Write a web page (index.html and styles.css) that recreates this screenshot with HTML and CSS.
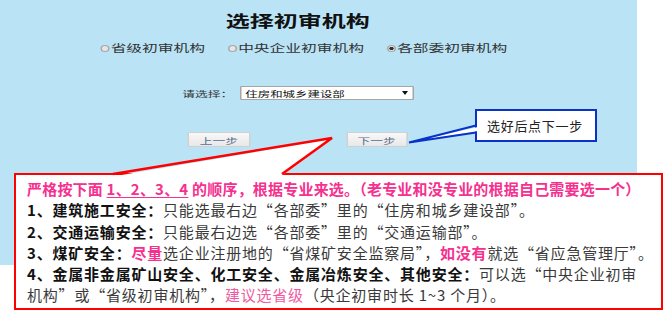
FILE: index.html
```html
<!DOCTYPE html>
<html lang="zh-CN">
<head>
    <meta charset="UTF-8">
    <meta name="viewport" content="width=device-width, initial-scale=1.0">
    <title>选择初审机构</title>
    <link rel="stylesheet" href="styles.css">
</head>
<body>
<div class="page">
    <div class="panel">
        <div class="form">
            <h1 class="title">选择初审机构</h1>
            <div class="org-types">
                <label class="org"><span class="radio"></span>省级初审机构</label>
                <label class="org"><span class="radio"></span>中央企业初审机构</label>
                <label class="org"><span class="radio checked"></span>各部委初审机构</label>
            </div>
            <div class="pick-row">
                <span class="pick-label">请选择：</span>
                <div class="select">
                    <span>住房和城乡建设部</span>
                    <span class="arrow"></span>
                </div>
            </div>
            <div class="steps">
                <button class="step">上一步</button>
                <button class="step">下一步</button>
            </div>
        </div>
    </div>

    <div class="tip">选好后点下一步</div>

    <div class="note">
        <div class="lead">严格按下面 <u>1、2、3、4</u> 的顺序，根据专业来选。（老专业和没专业的根据自己需要选一个）</div>
        <div><b>1、建筑施工安全：</b>只能选最右边“各部委”里的“住房和城乡建设部”。</div>
        <div><b>2、交通运输安全：</b>只能最右边选“各部委”里的“交通运输部”。</div>
        <div><b>3、煤矿安全：</b><b class="pink">尽量</b>选企业注册地的“省煤矿安全监察局”，<b class="pink">如没有</b>就选“省应急管理厅”。</div>
        <div><b>4、金属非金属矿山安全、化工安全、金属冶炼安全、其他安全：</b>可以选“中央企业初审</div>
        <div>机构”或“省级初审机构”，<span class="soft-pink">建议选省级</span>（央企初审时长 1~3 个月）。</div>
    </div>

    <svg class="pointers" width="666" height="316" viewBox="0 0 666 316">
        <polygon points="116,176 332,139 281,176" fill="#fff"/>
        <polyline points="113,174 332,138 282,174" fill="none" stroke="#ff0000" stroke-width="2.5"/>
        <polygon points="478,127 411,142 478,131" fill="#fff"/>
        <polyline points="476,125.5 409,142.5 476,132.5" fill="none" stroke="#0a32c8" stroke-width="2.2"/>
    </svg>
</div>
</body>
</html>
```

FILE: styles.css
```css
body {
    margin: 0;
    background: #fff;
    font-family: "Noto Sans CJK SC", sans-serif;
}

.page {
    position: relative;
    width: 666px;
    height: 316px;
    overflow: hidden;
}

.panel {
    width: 637px;
    height: 265px;
    background: #bae4f6;
}

/* the screenshot is stretched sideways, so the form is too */
.form {
    width: 397px;
    padding-top: 10px;
    transform: scaleX(1.5);
    transform-origin: 0 0;
    text-align: center;
}

.title {
    margin: 0;
    font-size: 16px;
    line-height: 20px;
    font-weight: 700;
    color: #111;
}

.org-types {
    display: flex;
    justify-content: center;
    gap: 15px;
    margin-top: 11px;
    padding-left: 8px;
    font-size: 10.5px;
    line-height: 14px;
    color: #333;
}

.org {
    display: flex;
    align-items: center;
    gap: 1px;
}

.radio {
    width: 6px;
    height: 7px;
    box-sizing: border-box;
    border: 1px solid #a8a8a8;
    border-radius: 50%;
    background: #e6e6e6;
}

.radio.checked {
    background: radial-gradient(circle, #333 0 1.2px, #e6e6e6 1.8px);
}

.pick-row {
    display: flex;
    justify-content: center;
    align-items: center;
    gap: 4px;
    height: 14px;
    margin-top: 31px;
}

.pick-label {
    font-size: 8.5px;
    color: #333;
}

.select {
    display: flex;
    justify-content: space-between;
    align-items: center;
    width: 116px;
    height: 14px;
    box-sizing: border-box;
    padding: 0 3px;
    border: 1px solid #a6a6a6;
    border-radius: 1px;
    background: #fff;
    font-size: 8.3px;
    color: #111;
}

.arrow {
    width: 0;
    height: 0;
    border-left: 2.3px solid transparent;
    border-right: 2.3px solid transparent;
    border-top: 4px solid #111;
}

.steps {
    display: flex;
    justify-content: center;
    gap: 64px;
    margin-top: 32px;
}

.step {
    width: 41.3px;
    height: 15px;
    padding: 0;
    border: 1px solid #d0d0d0;
    border-radius: 1px;
    background: linear-gradient(#f8f8f8, #e8e8e8);
    font-family: inherit;
    font-size: 8.5px;
    color: #5d6d8e;
}

.tip {
    position: absolute;
    left: 475px;
    top: 109px;
    width: 122px;
    height: 33px;
    box-sizing: border-box;
    padding-left: 10px;
    border: 2px solid #0a32c8;
    background: #fff;
    font-size: 13px;
    line-height: 29px;
    letter-spacing: 0.7px;
    color: #222;
}

.note {
    position: absolute;
    left: 14px;
    top: 173px;
    width: 649px;
    height: 137px;
    box-sizing: border-box;
    padding: 3px 0 0 11px;
    border: 2px solid #ff0000;
    background: #fff;
    font-size: 15px;
    line-height: 21.3px;
    letter-spacing: 0.8px;
    white-space: nowrap;
    color: #3a3a3a;
}

.note b {
    color: #111;
}

.note .lead {
    font-weight: 700;
    letter-spacing: 0.2px;
    color: #f5308f;
}

.note b.pink {
    color: #f5308f;
}

.note u {
    text-decoration-color: #f5308f;
    text-underline-offset: 2px;
}

.soft-pink {
    color: #ef5aa0;
}

.pointers {
    position: absolute;
    left: 0;
    top: 0;
    pointer-events: none;
}
```
